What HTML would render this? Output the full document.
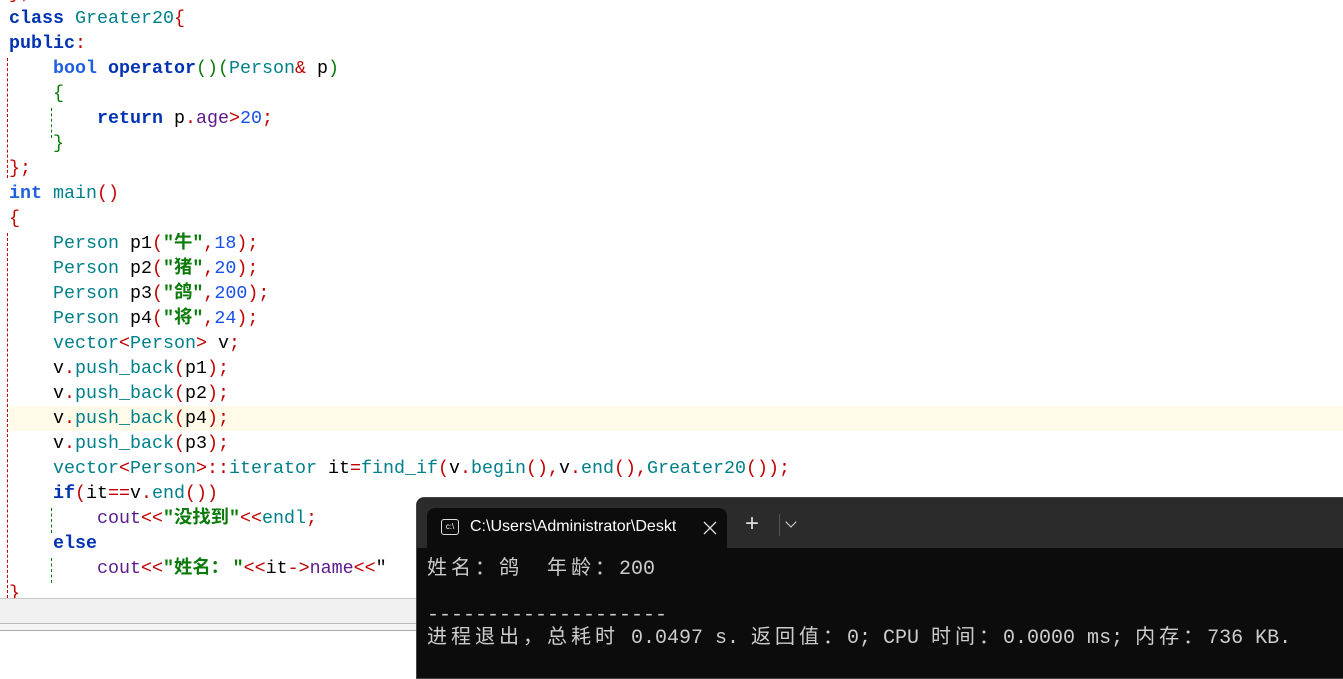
<html><head><style>
body{margin:0;width:1343px;height:666px;overflow:hidden;background:#fff;position:relative;font-family:"Liberation Mono","Noto Sans CJK SC",monospace;}
.code{position:absolute;left:9px;top:-19px;font-size:18.33px;line-height:25px;white-space:pre;color:#000}
.k{color:#0033b3;font-weight:bold}.kb{color:#1f5fe0;font-weight:bold}.t{color:#00808a}.r{color:#c00000}.g{color:#0a7a0a}.s{color:#0a7a0a;font-weight:bold}.n{color:#1750eb}.p{color:#5c1a8c}
.hl{position:absolute;left:9px;right:0;top:406px;height:25px;background:#fffbe8}
.term{position:absolute;left:416px;top:497px;width:940px;height:180px;background:#0c0c0c;border-radius:8px 0 0 0;border:1px solid #444}
.bar{position:absolute;left:0;top:0;right:0;height:50px;background:#2b2b2b;border-radius:8px 0 0 0}
.tab{position:absolute;left:10px;top:10px;width:300px;height:40px;background:#0c0c0c;border-radius:8px 8px 0 0;color:#fff;font-family:"Liberation Sans",sans-serif;font-size:16px}
.tt{position:absolute;color:#ccc;font-size:20px;line-height:23px;white-space:pre;left:10px;top:60px}
.c{display:inline-block;width:24px;height:23px;vertical-align:top;overflow:visible}
</style></head><body>
<div class="hl"></div>
<div style="position:absolute;left:7px;top:58px;height:120px;border-left:1px dashed #c00000"></div>
<div style="position:absolute;left:51px;top:108px;height:30px;border-left:1px dashed #0a7a0a"></div>
<div style="position:absolute;left:7px;top:233px;height:365px;border-left:1px dashed #c00000"></div>
<div style="position:absolute;left:51px;top:508px;height:25px;border-left:1px dashed #0a7a0a"></div>
<div style="position:absolute;left:51px;top:558px;height:25px;border-left:1px dashed #0a7a0a"></div>
<div class="code"><span class="r">};</span>
<span class="k">class</span> <span class="t">Greater20</span><span class="r">{</span>
<span class="k">public</span><span class="r">:</span>
    <span class="kb">bool</span> <span class="k">operator</span><span class="g">()(</span><span class="t">Person</span><span class="r">&amp;</span> p<span class="g">)</span>
    <span class="g">{</span>
        <span class="k">return</span> p<span class="r">.</span><span class="p">age</span><span class="r">&gt;</span><span class="n">20</span><span class="r">;</span>
    <span class="g">}</span>
<span class="r">};</span>
<span class="kb">int</span> <span class="t">main</span><span class="r">()</span>
<span class="r">{</span>
    <span class="t">Person</span> p1<span class="r">(</span><span class="s">"牛"</span><span class="r">,</span><span class="n">18</span><span class="r">);</span>
    <span class="t">Person</span> p2<span class="r">(</span><span class="s">"猪"</span><span class="r">,</span><span class="n">20</span><span class="r">);</span>
    <span class="t">Person</span> p3<span class="r">(</span><span class="s">"鸽"</span><span class="r">,</span><span class="n">200</span><span class="r">);</span>
    <span class="t">Person</span> p4<span class="r">(</span><span class="s">"将"</span><span class="r">,</span><span class="n">24</span><span class="r">);</span>
    <span class="t">vector</span><span class="r">&lt;</span><span class="t">Person</span><span class="r">&gt;</span> v<span class="r">;</span>
    v<span class="r">.</span><span class="t">push_back</span><span class="r">(</span>p1<span class="r">);</span>
    v<span class="r">.</span><span class="t">push_back</span><span class="r">(</span>p2<span class="r">);</span>
    v<span class="r">.</span><span class="t">push_back</span><span class="r">(</span>p4<span class="r">);</span>
    v<span class="r">.</span><span class="t">push_back</span><span class="r">(</span>p3<span class="r">);</span>
    <span class="t">vector</span><span class="r">&lt;</span><span class="t">Person</span><span class="r">&gt;::</span><span class="t">iterator</span> it<span class="r">=</span><span class="t">find_if</span><span class="r">(</span>v<span class="r">.</span><span class="t">begin</span><span class="r">(),</span>v<span class="r">.</span><span class="t">end</span><span class="r">(),</span><span class="t">Greater20</span><span class="r">());</span>
    <span class="k">if</span><span class="r">(</span>it<span class="r">==</span>v<span class="r">.</span><span class="t">end</span><span class="r">())</span>
        <span class="p">cout</span><span class="r">&lt;&lt;</span><span class="s">"没找到"</span><span class="r">&lt;&lt;</span><span class="t">endl</span><span class="r">;</span>
    <span class="k">else</span>
        <span class="p">cout</span><span class="r">&lt;&lt;</span><span class="s">"姓名<span style="display:inline-block;width:22px">：</span>"</span><span class="r">&lt;&lt;</span>it<span class="r">-&gt;</span><span class="p">name</span><span class="r">&lt;&lt;</span>"
<span class="r">}</span></div>
<div style="position:absolute;left:0;right:0;top:598px;height:24px;background:#f0f0f0;border-top:1px solid #c8c8c8"></div>
<div style="position:absolute;left:0;right:0;top:623px;height:6px;background:#f5f5f5;border-top:1px solid #bbb;border-bottom:1px solid #aaa"></div>
<div class="term">
 <div class="bar"></div>
 <div class="tab">
  <div style="position:absolute;left:14px;top:11px;width:16px;height:14px;border:1.5px solid #ddd;border-radius:3px;font-size:8px;line-height:14px;text-align:center">c:\</div>
  <div style="position:absolute;left:43px;top:10px;width:206px;overflow:hidden;white-space:nowrap">C:\Users\Administrator\Desktop</div>
  <svg style="position:absolute;left:276px;top:13px" width="14" height="14"><path d="M1 1L13 13M13 1L1 13" stroke="#ddd" stroke-width="1.3"/></svg>
 </div>
 <div style="position:absolute;left:328px;top:14px;color:#ddd;font-family:'Liberation Sans';font-size:24px;line-height:24px">+</div>
 <div style="position:absolute;left:362px;top:16px;height:22px;border-left:1px solid #555"></div>
 <div style="position:absolute;left:370px;top:20px;width:7px;height:7px;border-right:1.5px solid #ddd;border-bottom:1.5px solid #ddd;transform:rotate(45deg)"></div>
 <div class="tt"><span class="c">姓</span><span class="c">名</span><span class="c">：</span><span class="c">鸽</span>  <span class="c">年</span><span class="c">龄</span><span class="c">：</span>200
 
--------------------
<span class="c">进</span><span class="c">程</span><span class="c">退</span><span class="c">出</span><span class="c">，</span><span class="c">总</span><span class="c">耗</span><span class="c">时</span> 0.0497 s. <span class="c">返</span><span class="c">回</span><span class="c">值</span><span class="c">：</span>0; CPU <span class="c">时</span><span class="c">间</span><span class="c">：</span>0.0000 ms; <span class="c">内</span><span class="c">存</span><span class="c">：</span>736 KB.</div>
</div>
</body></html>
